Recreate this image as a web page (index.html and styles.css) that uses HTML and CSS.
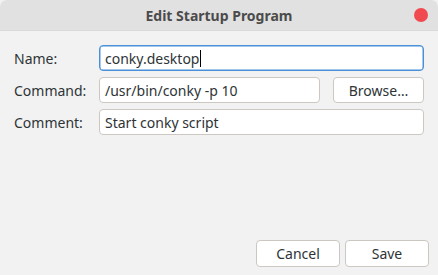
FILE: index.html
```html
<!DOCTYPE html>
<html lang="en">
<head>
    <meta charset="UTF-8">
    <title>Edit Startup Program</title>
    <link rel="stylesheet" href="styles.css">
</head>
<body>
    <div class="window">
        <div class="titlebar">
            <span class="title">Edit Startup Program</span>
            <span class="close"></span>
        </div>
        <div class="content">
            <div class="form">
                <label for="name">Name:</label>
                <div class="field wide focused" id="name">conky.desktop<span class="caret"></span></div>

                <label for="command">Command:</label>
                <div class="field" id="command">/usr/bin/conky -p 10</div>
                <button class="btn browse">Browse…</button>

                <label for="comment">Comment:</label>
                <div class="field wide" id="comment">Start conky script</div>
            </div>
            <div class="actions">
                <button class="btn">Cancel</button>
                <button class="btn">Save</button>
            </div>
        </div>
    </div>
</body>
</html>
```

FILE: styles.css
```css
body {
    margin: 0;
    background-color: #f2f2f2;
    font-family: 'Noto Sans', 'DejaVu Sans', sans-serif;
    font-size: 14px;
    color: #2e3436;
}
.window {
    width: 438px;
    height: 275px;
    display: flex;
    flex-direction: column;
    background-color: #f2f2f2;
    border-radius: 7px 7px 0 0;
    overflow: hidden;
}
.titlebar {
    height: 31px;
    flex-shrink: 0;
    display: flex;
    align-items: center;
    justify-content: center;
    background-color: #e1e1e1;
    border-bottom: 1px solid #dadada;
    box-sizing: border-box;
    position: relative;
}
.title {
    font-weight: bold;
    color: #4b4b4b;
    font-size: 14px;
}
.close {
    position: absolute;
    right: 10px;
    top: 8px;
    width: 14px;
    height: 14px;
    border-radius: 50%;
    background-color: #f04a50;
}
.content {
    flex: 1;
    display: flex;
    flex-direction: column;
    justify-content: space-between;
    padding: 14px 9px 8px 14px;
}
.form {
    display: grid;
    grid-template-columns: 85px 1fr 104px;
    row-gap: 6px;
    margin-right: 5px;
}
.form label {
    display: flex;
    align-items: center;
}
.field {
    height: 26px;
    box-sizing: border-box;
    border: 1px solid #cdc7c2;
    border-radius: 4px;
    background-color: #fff;
    display: flex;
    align-items: center;
    padding: 0 5px;
    white-space: nowrap;
}
.field.wide {
    grid-column: 2 / 4;
}
.field.focused {
    border-color: #4a90d9;
    box-shadow: inset 0 0 0 0.5px #4a90d9;
}
.caret {
    width: 1px;
    height: 17px;
    background-color: #000;
    margin-left: 1px;
}
.btn {
    height: 26px;
    font-family: inherit;
    font-size: 14px;
    color: #2e3436;
    background-color: #fff;
    border: 1px solid #cdc7c2;
    border-radius: 4px;
    padding: 0;
}
.browse {
    margin-left: 13px;
}
.actions {
    display: flex;
    justify-content: flex-end;
    gap: 5px;
}
.actions .btn {
    width: 84px;
    height: 27px;
}
```
